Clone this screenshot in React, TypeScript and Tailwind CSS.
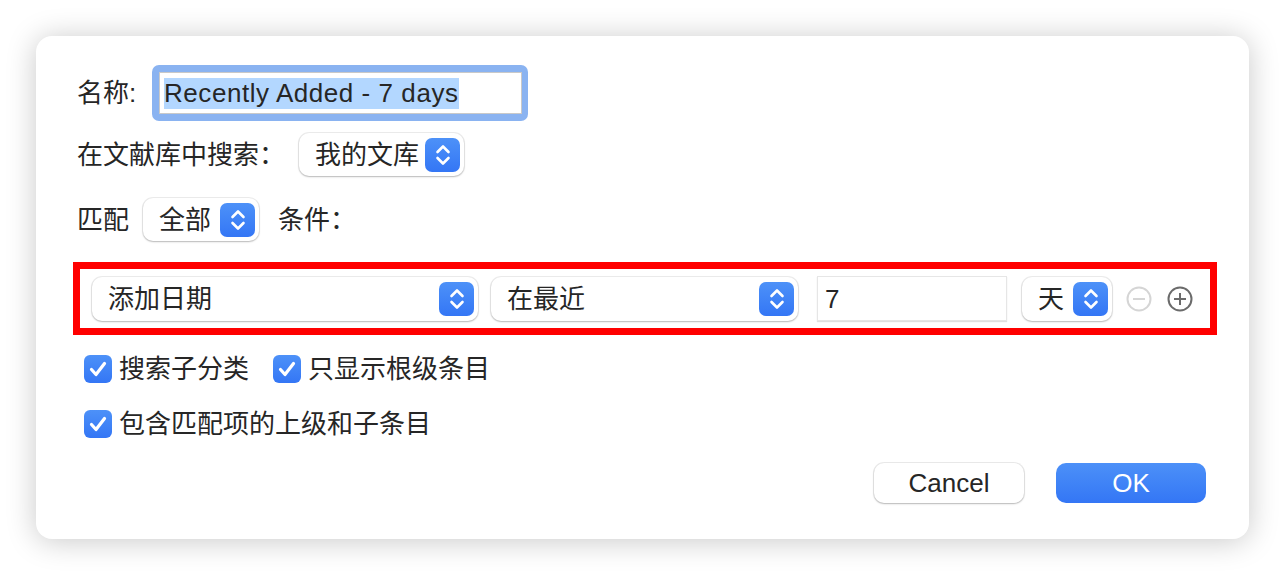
import React from "react";

const Stepper = () => (
  <div className="flex h-[34px] w-[35px] items-center justify-center rounded-[7px] bg-gradient-to-b from-[#4d91f8] to-[#3476f5]">
    <svg width="34" height="34" viewBox="0 0 34 34" fill="none">
      <path d="M11.5 14 L17 8.5 L22.5 14" stroke="white" strokeWidth="2.6" strokeLinecap="round" strokeLinejoin="round" />
      <path d="M11.5 20 L17 25.5 L22.5 20" stroke="white" strokeWidth="2.6" strokeLinecap="round" strokeLinejoin="round" />
    </svg>
  </div>
);

const Popup = ({ label, className }: { label: string; className: string }) => (
  <div
    className={`flex items-center justify-between rounded-[10px] bg-white pl-[16px] pr-[4px] shadow-[0_0_0_1px_rgba(0,0,0,0.07),0_1px_2px_rgba(0,0,0,0.22)] ${className}`}
  >
    <span>{label}</span>
    <Stepper />
  </div>
);

const Check = ({ label }: { label: string }) => (
  <div className="flex items-center">
    <div className="flex h-[28px] w-[28px] items-center justify-center rounded-[6px] bg-gradient-to-b from-[#4d91f8] to-[#3476f5]">
      <svg width="28" height="28" viewBox="0 0 28 28" fill="none">
        <path d="M7.5 14.5 L12 19.5 L20.5 8.5" stroke="white" strokeWidth="3.2" strokeLinecap="round" strokeLinejoin="round" />
      </svg>
    </div>
    <span className="ml-[7px]">{label}</span>
  </div>
);

export default function App() {
  return (
    <div className="min-h-[576px] bg-white pl-[36px] pt-[36px] font-['Liberation_Sans','Noto_Sans_CJK_SC',sans-serif] text-[26px] leading-none text-[#262626]">
      <div className="flex h-[503px] w-[1213px] flex-col rounded-[16px] bg-white pl-[41px] pt-[29px] shadow-[0_2px_30px_rgba(0,0,0,0.22)]">
        {/* name */}
        <div className="flex h-[56px] items-center">
          <span className="w-[75px]">名称:</span>
          <div className="rounded-[7px] bg-[#8ab3f1] p-[7px] pr-[6px]">
            <div className="flex h-[42px] w-[363px] items-center border border-[#c9c9c9] bg-white pl-[4px]">
              <span className="bg-[#b3d7ff] leading-[31px] tracking-[0.55px]">Recently Added - 7 days</span>
            </div>
          </div>
        </div>

        {/* library */}
        <div className="mt-[12px] flex items-center">
          <span className="w-[222px]">在文献库中搜索：</span>
          <Popup label="我的文库" className="h-[43px] w-[165px]" />
        </div>

        {/* match */}
        <div className="mt-[22px] flex items-center">
          <span className="w-[66px]">匹配</span>
          <Popup label="全部" className="h-[43px] w-[116px]" />
          <span className="ml-[19px]">条件：</span>
        </div>

        {/* condition row */}
        <div className="-ml-[4px] mt-[21px] flex h-[73px] w-[1144px] items-center border-[7px] border-[#ff0000] pl-[12px]">
          <Popup label="添加日期" className="h-[44px] w-[386px]" />
          <Popup label="在最近" className="ml-[13px] h-[44px] w-[307px]" />
          <div className="ml-[19px] flex h-[45px] w-[190px] items-center border border-[#e6e6e6] bg-white pl-[7px] shadow-[0_1px_1px_rgba(0,0,0,0.12)]">
            7
          </div>
          <Popup label="天" className="ml-[15px] h-[44px] w-[90px]" />
          <svg className="ml-[14px]" width="26" height="26" viewBox="0 0 26 26" fill="none">
            <circle cx="13" cy="13" r="11.5" stroke="#d5d5d5" strokeWidth="2" />
            <path d="M7 13 H19" stroke="#d5d5d5" strokeWidth="2" />
          </svg>
          <svg className="ml-[15px]" width="26" height="26" viewBox="0 0 26 26" fill="none">
            <circle cx="13" cy="13" r="11.5" stroke="#6b6b6b" strokeWidth="2" />
            <path d="M7 13 H19 M13 7 V19" stroke="#6b6b6b" strokeWidth="2" />
          </svg>
        </div>

        {/* options */}
        <div className="ml-[7px] mt-[20px] flex items-center gap-[24px]">
          <Check label="搜索子分类" />
          <Check label="只显示根级条目" />
        </div>
        <div className="ml-[7px] mt-[27px] flex items-center">
          <Check label="包含匹配项的上级和子条目" />
        </div>

        {/* buttons */}
        <div className="mr-[43px] mt-[25px] flex justify-end gap-[32px]">
          <button className="flex h-[40px] w-[150px] items-center justify-center rounded-[10px] bg-white shadow-[0_0_0_1px_rgba(0,0,0,0.08),0_1px_2px_rgba(0,0,0,0.22)]">
            Cancel
          </button>
          <button className="flex h-[40px] w-[150px] items-center justify-center rounded-[10px] bg-gradient-to-b from-[#4c90f8] to-[#3476f5] text-white">
            OK
          </button>
        </div>
      </div>
    </div>
  );
}
